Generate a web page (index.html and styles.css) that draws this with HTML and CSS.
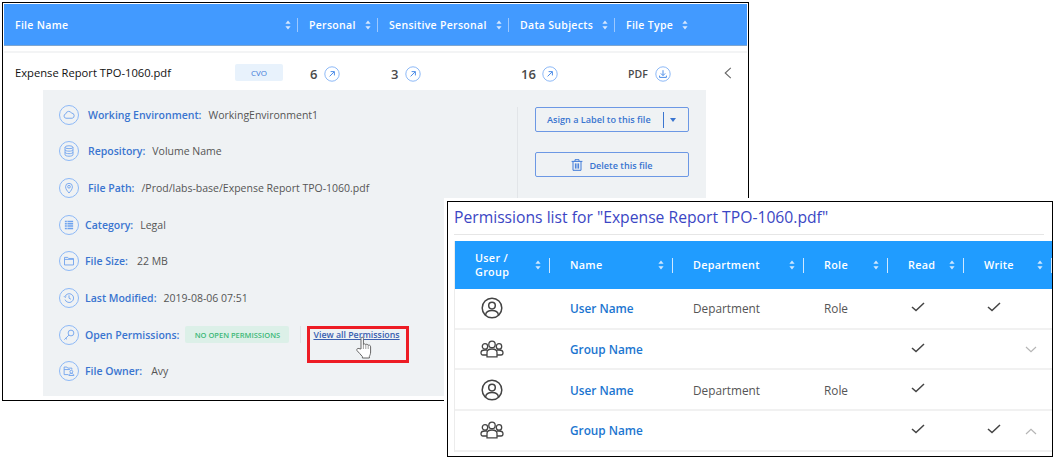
FILE: index.html
```html
<!DOCTYPE html>
<html>
    <head>
        <link rel="stylesheet" href="styles.css">
        <title>File details and permissions</title>
    </head>
    <body>
        <svg class="defs" width="0" height="0">
            <symbol id="sort" viewBox="0 0 6 10">
                <path d="M3 0.5L5.6 3.8H0.4zM3 9.5L0.4 6.2H5.6z" fill="currentColor"/>
            </symbol>
            <symbol id="open" viewBox="0 0 16 16">
                <circle cx="8" cy="8" r="7.2" fill="none" stroke="#8db9f7"/>
                <path d="M5.6 10.4L10.2 5.8M6.6 5.6H10.4V9.4" fill="none" stroke="#4f8fe8"/>
            </symbol>
            <symbol id="download" viewBox="0 0 16 16">
                <circle cx="8" cy="8" r="7.2" fill="none" stroke="#8db9f7"/>
                <path d="M8 4.2V9.4M5.8 7.4L8 9.6L10.2 7.4M4.6 9.6V11.4H11.4V9.6" fill="none" stroke="#4f8fe8"/>
            </symbol>
            <symbol id="cloud" viewBox="0 0 20 20">
                <path d="M6.6 13.6A2.5 2.5 0 0 1 6.4 8.7A3.4 3.4 0 0 1 12.8 7.9A2.9 2.9 0 0 1 13.6 13.6z" fill="none" stroke="#6fa3ee"/>
            </symbol>
            <symbol id="database" viewBox="0 0 20 20">
                <ellipse cx="10" cy="5.8" rx="4.4" ry="1.6" fill="none" stroke="#6fa3ee"/>
                <path d="M5.6 5.8V14.2C5.6 15.1 7.6 15.8 10 15.8S14.4 15.1 14.4 14.2V5.8M5.6 8.6C5.6 9.5 7.6 10.2 10 10.2S14.4 9.5 14.4 8.6M5.6 11.4C5.6 12.3 7.6 13 10 13S14.4 12.3 14.4 11.4" fill="none" stroke="#6fa3ee"/>
            </symbol>
            <symbol id="pin" viewBox="0 0 20 20">
                <path d="M10 15.6C8 13.2 6.2 11.2 6.2 8.6A3.8 3.8 0 0 1 13.8 8.6C13.8 11.2 12 13.2 10 15.6z" fill="none" stroke="#6fa3ee"/>
                <circle cx="10" cy="8.6" r="1.5" fill="none" stroke="#6fa3ee"/>
            </symbol>
            <symbol id="category" viewBox="0 0 20 20">
                <path d="M5.4 6H14.6M5.4 8.6H14.6M5.4 11.2H14.6M5.4 13.8H14.6" fill="none" stroke="#6fa3ee" stroke-width="1.7"/>
                <path d="M8 5V15" fill="none" stroke="#eff2f4" stroke-width="0.7"/>
            </symbol>
            <symbol id="folder" viewBox="0 0 20 20">
                <path d="M5 6H8.6L9.6 7.2H15V14.4H5z M5 8.2H15" fill="none" stroke="#6fa3ee"/>
            </symbol>
            <symbol id="clock" viewBox="0 0 20 20">
                <path d="M5.6 8.4A4.9 4.9 0 1 1 5.6 11.8M4.4 8L5.6 9.4L7 8.4M10 7V10.2L12.2 11.4" fill="none" stroke="#6fa3ee"/>
            </symbol>
            <symbol id="key" viewBox="0 0 20 20">
                <circle cx="12.2" cy="7.8" r="3.2" fill="none" stroke="#6fa3ee"/>
                <path d="M9.9 10.1L4.8 15.2M6.4 13.6L7.8 14.8" fill="none" stroke="#6fa3ee"/>
            </symbol>
            <symbol id="owner" viewBox="0 0 20 20">
                <path d="M9 14H4.6V5.6H7.6L8.6 6.8H13.2V8.4M4.6 8.4H11" fill="none" stroke="#6fa3ee"/>
                <circle cx="12.6" cy="10.8" r="1.6" fill="none" stroke="#6fa3ee"/>
                <path d="M9.8 15C9.8 13.4 11 12.8 12.6 12.8S15.4 13.4 15.4 15z" fill="none" stroke="#6fa3ee"/>
            </symbol>
            <symbol id="trash" viewBox="0 0 12 12">
                <path d="M0.6 2.4H11.4M4 2.2V0.7H8V2.2M2 2.6V11.3H10V2.6M4.4 4.4V9.6M6 4.4V9.6M7.6 4.4V9.6" fill="none" stroke="#3f7ad8"/>
            </symbol>
            <symbol id="user" viewBox="0 0 22 22">
                <circle cx="11" cy="11" r="9.8" fill="none" stroke="#444" stroke-width="1.5"/>
                <circle cx="11" cy="8.6" r="3.3" fill="none" stroke="#444" stroke-width="1.5"/>
                <path d="M4.6 18C5 15 7.4 13.6 11 13.6S17 15 17.4 18" fill="none" stroke="#444" stroke-width="1.5"/>
            </symbol>
            <symbol id="group" viewBox="0 0 24 18">
                <circle cx="12" cy="4.4" r="3.2" fill="none" stroke="#444" stroke-width="1.3"/>
                <circle cx="5" cy="6.4" r="2.7" fill="none" stroke="#444" stroke-width="1.3"/>
                <circle cx="19" cy="6.4" r="2.7" fill="none" stroke="#444" stroke-width="1.3"/>
                <path d="M7 16.8V12.4C7 10.4 9 9 12 9S17 10.4 17 12.4V16.8z" fill="#fff" stroke="#444" stroke-width="1.3"/>
                <path d="M7 15H3C1.6 15 1 14 1 12.8C1 11 2.6 10 5 10H7M17 15H21C22.4 15 23 14 23 12.8C23 11 21.4 10 19 10H17" fill="none" stroke="#444" stroke-width="1.3"/>
            </symbol>
            <symbol id="check" viewBox="0 0 14 10">
                <path d="M1 5L5 8.6L13 1" fill="none" stroke="#444" stroke-width="1.5"/>
            </symbol>
            <symbol id="down" viewBox="0 0 12 7">
                <path d="M1 1L6 5.6L11 1" fill="none" stroke="#b5b5b5" stroke-width="1.2"/>
            </symbol>
            <symbol id="up" viewBox="0 0 12 7">
                <path d="M1 6L6 1.4L11 6" fill="none" stroke="#b5b5b5" stroke-width="1.2"/>
            </symbol>
        </svg>

        <div class="files-window">
            <div class="files-head">
                <div class="head-cell col-name"><span>File Name</span><svg class="sort"><use href="#sort"/></svg></div>
                <div class="head-cell col-personal"><span>Personal</span><svg class="sort"><use href="#sort"/></svg></div>
                <div class="head-cell col-sensitive"><span>Sensitive Personal</span><svg class="sort"><use href="#sort"/></svg></div>
                <div class="head-cell col-subjects"><span>Data Subjects</span><svg class="sort"><use href="#sort"/></svg></div>
                <div class="head-cell col-type no-divider"><span>File Type</span><svg class="sort"><use href="#sort"/></svg></div>
            </div>
            <div class="head-rule"></div>
            <div class="file-row">
                <div class="file-cell col-name file-name">
                    <span>Expense Report TPO-1060.pdf</span>
                    <span class="badge-cvo">CVO</span>
                </div>
                <div class="file-cell col-personal"><span class="count">6</span><svg class="open"><use href="#open"/></svg></div>
                <div class="file-cell col-sensitive"><span class="count">3</span><svg class="open"><use href="#open"/></svg></div>
                <div class="file-cell col-subjects"><span class="count">16</span><svg class="open"><use href="#open"/></svg></div>
                <div class="file-cell col-type"><span class="type">PDF</span><svg class="open"><use href="#download"/></svg></div>
                <svg class="collapse" width="8" height="12" viewBox="0 0 8 12"><path d="M6.8 0.8L1.2 6L6.8 11.2" fill="none" stroke="#666" stroke-width="1.1"/></svg>
            </div>
            <div class="detail-panel">
                <div class="detail-list">
                    <div class="detail-row wide"><svg class="detail-icon"><use href="#cloud"/></svg><span class="label">Working Environment:</span><span class="value">WorkingEnvironment1</span></div>
                    <div class="detail-row wide"><svg class="detail-icon"><use href="#database"/></svg><span class="label">Repository:</span><span class="value">Volume Name</span></div>
                    <div class="detail-row wide"><svg class="detail-icon"><use href="#pin"/></svg><span class="label">File Path:</span><span class="value">/Prod/labs-base/Expense Report TPO-1060.pdf</span></div>
                    <div class="detail-row"><svg class="detail-icon"><use href="#category"/></svg><span class="label">Category:</span><span class="value">Legal</span></div>
                    <div class="detail-row"><svg class="detail-icon"><use href="#folder"/></svg><span class="label">File Size:</span><span class="value far">22 MB</span></div>
                    <div class="detail-row"><svg class="detail-icon"><use href="#clock"/></svg><span class="label">Last Modified:</span><span class="value">2019-08-06 07:51</span></div>
                    <div class="detail-row">
                        <svg class="detail-icon"><use href="#key"/></svg><span class="label">Open Permissions:</span>
                        <span class="badge-open">NO OPEN PERMISSIONS</span>
                        <span class="link-wrap">
                            <a class="view-link">View all Permissions</a>
                            <span class="red-box"></span>
                            <svg class="hand" width="17" height="23" viewBox="0 0 17 23">
                                <path d="M5 13V2.4C5 0.8 7.4 0.8 7.4 2.4V8.6C7.6 7.6 9.6 7.6 9.8 8.8C10 8 12 8 12.2 9.4C12.6 8.8 14.6 9 14.6 10.8V16C14.6 18 14 19 13.4 20.4V22H6.4V20.6C5 18.6 2.6 16.6 1 14.6C0.2 13.2 1.8 11.8 3 12.6z" fill="#fff" stroke="#666" stroke-width="1"/>
                                <path d="M7.4 8.6V13M9.8 8.8V13M12.2 9.4V13" fill="none" stroke="#888" stroke-width="0.8"/>
                            </svg>
                        </span>
                    </div>
                    <div class="detail-row"><svg class="detail-icon"><use href="#owner"/></svg><span class="label">File Owner:</span><span class="value far">Avy</span></div>
                </div>
                <div class="detail-actions">
                    <button class="action-btn label-btn"><span class="btn-text">Asign a Label to this file</span><span class="btn-caret"></span></button>
                    <button class="action-btn delete-btn"><svg width="12" height="12"><use href="#trash"/></svg><span>Delete this file</span></button>
                </div>
            </div>
        </div>

        <div class="perm-window">
            <h2 class="perm-title">Permissions list for "Expense Report TPO-1060.pdf"</h2>
            <div class="perm-table">
                <div class="perm-row perm-head">
                    <div class="perm-th user-col"><span>User /<br>Group</span><svg class="sort"><use href="#sort"/></svg></div>
                    <div class="perm-th"><span>Name</span><svg class="sort"><use href="#sort"/></svg></div>
                    <div class="perm-th"><span>Department</span><svg class="sort"><use href="#sort"/></svg></div>
                    <div class="perm-th"><span>Role</span><svg class="sort"><use href="#sort"/></svg></div>
                    <div class="perm-th"><span>Read</span><svg class="sort"><use href="#sort"/></svg></div>
                    <div class="perm-th"><span>Write</span><svg class="sort"><use href="#sort"/></svg></div>
                </div>
                <div class="perm-row">
                    <div class="perm-td who"><svg class="who-user"><use href="#user"/></svg></div>
                    <div class="perm-td name">User Name</div>
                    <div class="perm-td">Department</div>
                    <div class="perm-td">Role</div>
                    <div class="perm-td"><svg class="tick"><use href="#check"/></svg></div>
                    <div class="perm-td"><svg class="tick"><use href="#check"/></svg></div>
                </div>
                <div class="perm-row">
                    <div class="perm-td who"><svg class="who-group"><use href="#group"/></svg></div>
                    <div class="perm-td name">Group Name</div>
                    <div class="perm-td"></div>
                    <div class="perm-td"></div>
                    <div class="perm-td"><svg class="tick"><use href="#check"/></svg></div>
                    <div class="perm-td"><svg class="expand"><use href="#down"/></svg></div>
                </div>
                <div class="perm-row">
                    <div class="perm-td who"><svg class="who-user"><use href="#user"/></svg></div>
                    <div class="perm-td name">User Name</div>
                    <div class="perm-td">Department</div>
                    <div class="perm-td">Role</div>
                    <div class="perm-td"><svg class="tick"><use href="#check"/></svg></div>
                    <div class="perm-td"></div>
                </div>
                <div class="perm-row">
                    <div class="perm-td who"><svg class="who-group"><use href="#group"/></svg></div>
                    <div class="perm-td name">Group Name</div>
                    <div class="perm-td"></div>
                    <div class="perm-td"></div>
                    <div class="perm-td"><svg class="tick"><use href="#check"/></svg></div>
                    <div class="perm-td"><svg class="tick"><use href="#check"/></svg><svg class="expand up"><use href="#up"/></svg></div>
                </div>
            </div>
        </div>
    </body>
</html>
```

FILE: styles.css
```css
body {
    font-family: "Open Sans", "Liberation Sans", sans-serif;
    margin: 0;
    padding: 0;
    background: #fff;
    overflow: hidden;
}

.defs {
    position: absolute;
}

.sort {
    width: 6px;
    height: 10px;
    flex: none;
}

/* file details window */

.files-window {
    box-sizing: border-box;
    width: 747px;
    height: 399px;
    margin: 2px 0 0 2px;
    padding: 1px;
    border: 1px solid #000;
}

.files-head {
    display: flex;
    height: 42px;
    background: #429aff;
    border-bottom: 1px solid #7fa6cf;
    box-sizing: border-box;
    color: #fff;
}

.head-cell {
    display: flex;
    align-items: center;
    box-sizing: border-box;
    padding-left: 11px;
    font-size: 10.5px;
    font-weight: 600;
    letter-spacing: 0.3px;
    color: #fff;
}

.head-cell .sort {
    margin-left: auto;
    margin-right: 6px;
    color: #d5e7ff;
}

.head-cell::after {
    content: "";
    width: 1px;
    height: 14px;
    background: #9cc8ff;
}

.head-cell.no-divider::after {
    display: none;
}

.col-name { width: 294px; }
.col-personal { width: 80px; }
.col-sensitive { width: 131px; }
.col-subjects { width: 106px; }
.col-type { width: 79px; }

.head-rule {
    height: 2px;
    margin-top: 5px;
    background: #f3f4f5;
}

.file-row {
    display: flex;
    align-items: center;
    height: 37px;
    padding-top: 5px;
    box-sizing: border-box;
}

.file-cell {
    display: flex;
    align-items: center;
    box-sizing: border-box;
    padding-left: 12px;
    gap: 7px;
}

.col-sensitive.file-cell,
.col-type.file-cell {
    padding-left: 13px;
}

.file-cell.col-subjects {
    gap: 6px;
}

.file-name {
    justify-content: space-between;
    padding-left: 11px;
    padding-right: 15px;
    margin-bottom: 3px;
    font-size: 11.2px;
    color: #111;
}

.badge-cvo {
    width: 48px;
    height: 17px;
    line-height: 18px;
    text-align: center;
    font-size: 8px;
    color: #3f7ad8;
    background: #e8f2fc;
    border-radius: 2px;
}

.count {
    font-size: 13px;
    font-weight: 600;
    color: #4a4a4a;
}

.type {
    font-size: 10.5px;
    font-weight: 600;
    color: #4a4a4a;
}

.open {
    width: 16px;
    height: 16px;
}

.collapse {
    margin-left: 30px;
    margin-bottom: 2px;
}

.detail-panel {
    display: flex;
    width: 663px;
    height: 306px;
    margin-left: 39px;
    background: #eff2f4;
}

.detail-list {
    box-sizing: border-box;
    width: 474px;
    padding: 6.2px 0 0 16px;
    display: grid;
    grid-auto-rows: 36.7px;
}

.detail-row {
    display: flex;
    align-items: center;
    gap: 6px;
    font-size: 10.5px;
}

.detail-row.wide {
    gap: 9px;
}

.detail-icon {
    width: 20px;
    height: 20px;
    flex: none;
    border: 1.2px solid #8db9f7;
    border-radius: 50%;
    box-sizing: border-box;
}

.label {
    font-weight: 600;
    color: #3a75d0;
}

.value {
    margin-left: 1px;
    color: #555;
}

.detail-row.wide .value {
    margin-left: -2px;
}

.value.far {
    margin-left: 3px;
}

.badge-open {
    width: 104px;
    height: 17px;
    line-height: 18px;
    text-align: center;
    font-size: 7.5px;
    font-weight: 600;
    color: #3cb878;
    background: #dcf0e8;
    border-radius: 2px;
}

.link-wrap {
    position: relative;
    display: flex;
    align-items: center;
    height: 17px;
    margin-left: 5px;
    padding-left: 12px;
    border-left: 1px solid #dfe3e6;
}

.view-link {
    font-size: 8.8px;
    font-weight: 600;
    color: #3a5fb0;
    text-decoration: underline;
    white-space: nowrap;
}

.red-box {
    position: absolute;
    left: 6px;
    top: 0;
    width: 102px;
    height: 37px;
    box-sizing: border-box;
    border: 3px solid #ed1c24;
}

.hand {
    position: absolute;
    left: 55px;
    top: 10px;
}

.detail-actions {
    display: flex;
    flex-direction: column;
    gap: 20px;
    box-sizing: border-box;
    width: 189px;
    height: 200px;
    margin-top: 17px;
    padding-left: 17px;
    border-left: 1px solid #e2e5e8;
}

.action-btn {
    display: flex;
    align-items: center;
    justify-content: center;
    width: 154px;
    height: 25px;
    padding: 0;
    font-family: inherit;
    font-size: 9.1px;
    font-weight: 600;
    color: #3a75d0;
    background: transparent;
    border: 1px solid #6c98e4;
    border-radius: 2px;
}

.label-btn {
    justify-content: flex-start;
    padding-left: 11px;
}

.label-btn .btn-text {
    padding-right: 12px;
    border-right: 1px solid #3a75d0;
    line-height: 16px;
}

.btn-caret {
    width: 0;
    height: 0;
    margin-left: 6px;
    border-left: 3.5px solid transparent;
    border-right: 3.5px solid transparent;
    border-top: 4px solid #3a75d0;
}

.delete-btn {
    gap: 6px;
}

.delete-btn span {
    margin-top: 1px;
}

/* permissions window */

.perm-window {
    position: absolute;
    left: 447px;
    top: 201px;
    box-sizing: border-box;
    width: 606px;
    height: 256px;
    padding: 4px 0 0 6px;
    background: #fff;
    border: 1px solid #000;
    box-shadow: 0 0 0 3px #fff;
}

.perm-title {
    margin: 0 8px 0 0;
    padding-bottom: 6px;
    font-size: 15.7px;
    font-weight: 400;
    line-height: 22px;
    color: #3b46c4;
    border-bottom: 1px solid #e6e6e6;
}

.perm-table {
    margin-top: 6px;
    border-left: 1px solid #ececec;
}

.perm-row {
    display: grid;
    grid-template-columns: 95px 123px 131px 84px 76px 88px;
    height: 40.7px;
    box-sizing: border-box;
    border-bottom: 2px solid #f1f1f1;
}

.perm-head {
    height: 48px;
    background: #209cff;
    border-bottom: none;
}

.perm-th {
    display: flex;
    align-items: center;
    box-sizing: border-box;
    padding-left: 20px;
    font-size: 10.8px;
    font-weight: 600;
    letter-spacing: 0.3px;
    line-height: 14px;
    color: #fff;
}

.perm-th .sort {
    margin-left: auto;
    margin-right: 8px;
    color: #cfe8ff;
}

.perm-th::after {
    content: "";
    width: 1px;
    height: 15px;
    background: #cfe8ff;
}

.perm-td {
    display: flex;
    align-items: center;
    padding-left: 20px;
    font-size: 11.8px;
    color: #555;
}

.perm-td.name {
    font-weight: 600;
    color: #1b75d0;
}

.perm-td.who {
    padding-left: 26px;
}

.who-user {
    width: 22px;
    height: 22px;
}

.who-group {
    width: 24px;
    height: 18px;
    margin-left: -1px;
}

.tick {
    width: 14px;
    height: 10px;
    margin-top: -3px;
    margin-left: 3px;
}

.expand {
    width: 12px;
    height: 7px;
    margin-left: 24px;
}

.expand.up {
    margin-top: 3px;
}

.perm-td > .expand:first-child {
    margin-left: 41px;
}
```
